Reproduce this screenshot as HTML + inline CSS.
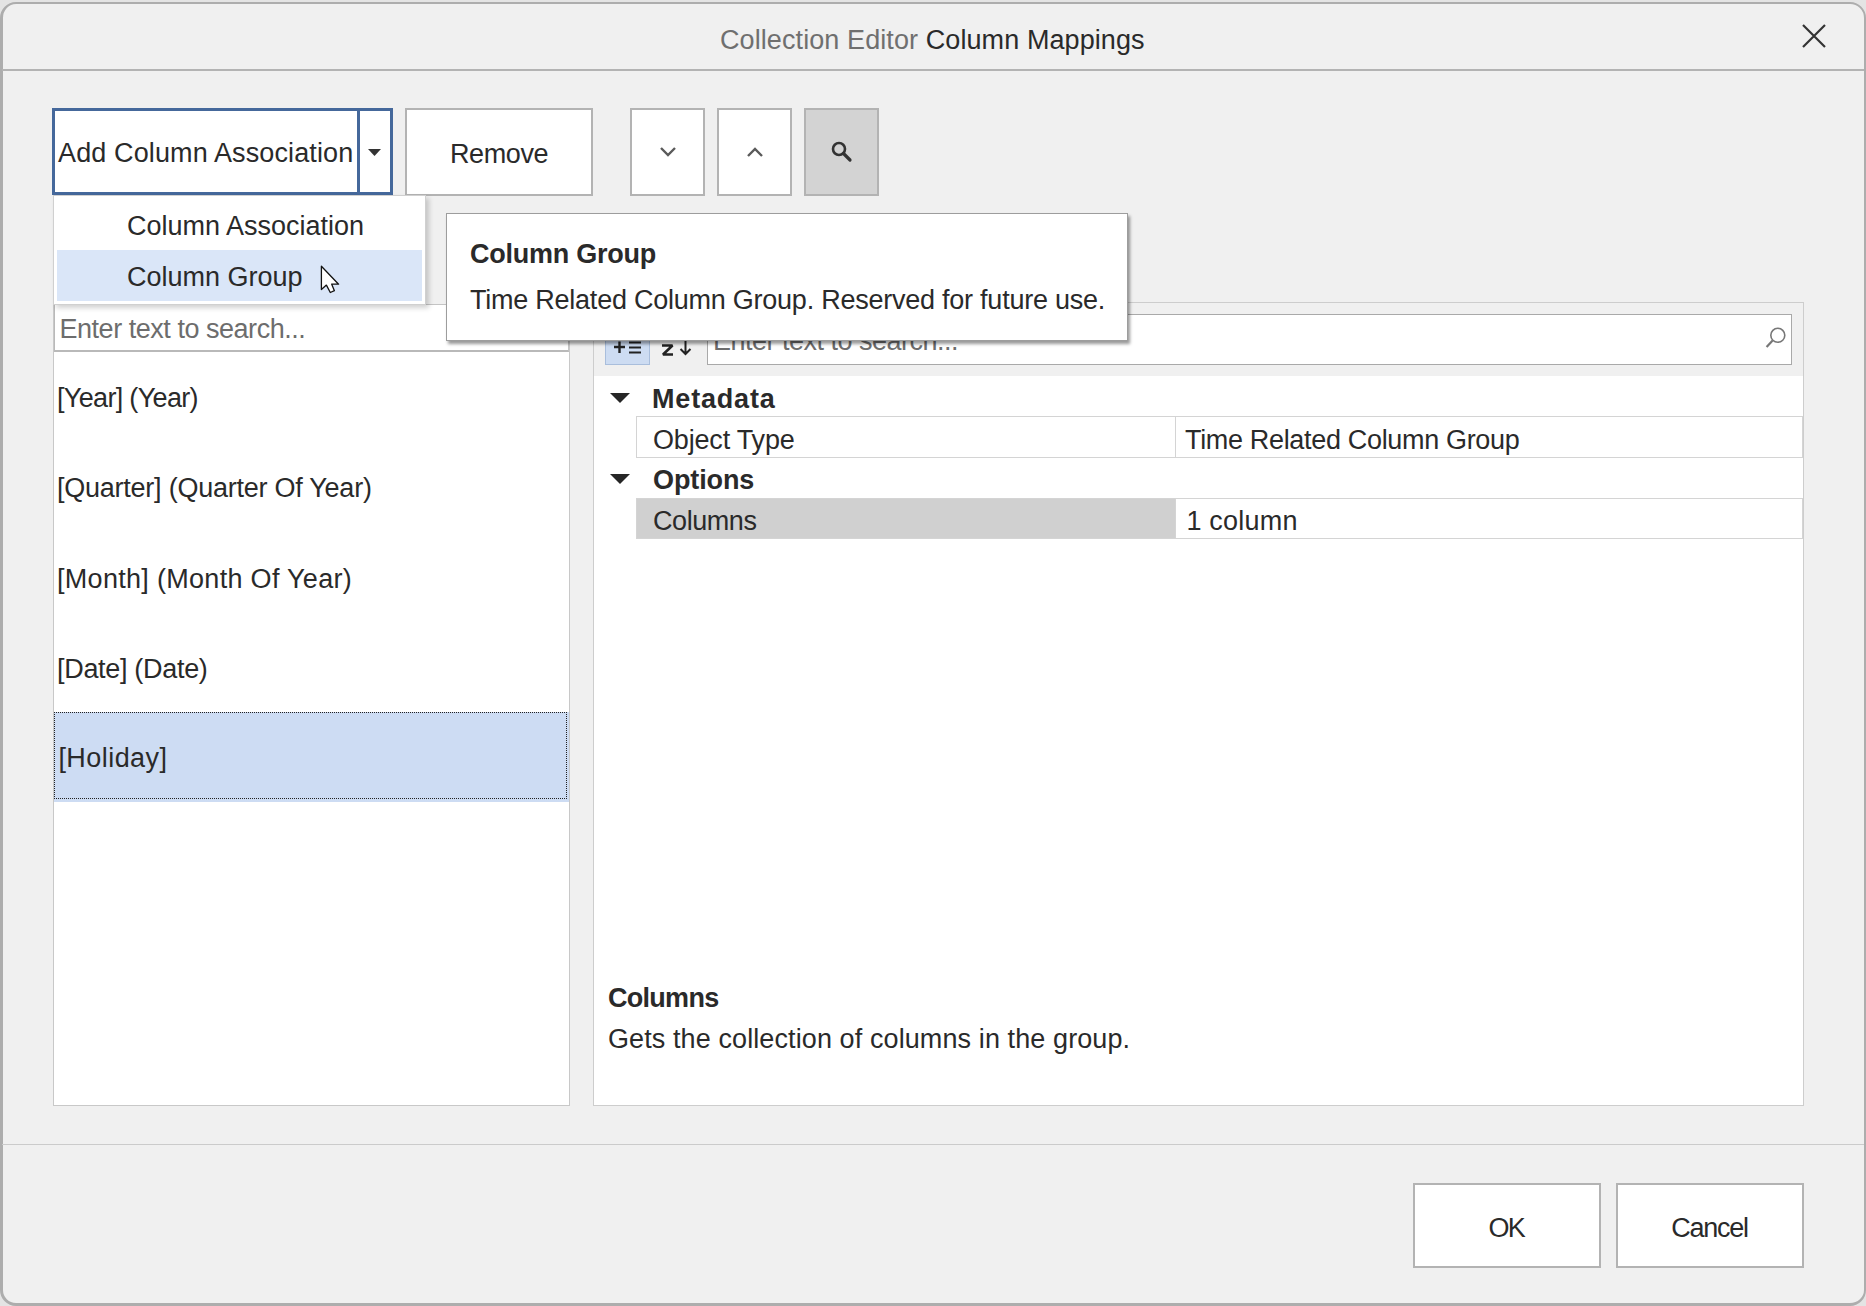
<!DOCTYPE html>
<html><head><meta charset="utf-8">
<style>
html,body{margin:0;padding:0}
body{width:1866px;height:1306px;background:#e4e4e4;position:relative;overflow:hidden;font-family:"Liberation Sans",sans-serif;color:#222}
.abs{position:absolute;box-sizing:border-box}
.t{position:absolute;font-size:27px;line-height:30px;white-space:nowrap;color:#2a2a2a}
.b{font-weight:bold}
#win{left:0;top:2px;width:1866px;height:1304px;border:2px solid #adadad;border-bottom-width:3px;border-left-width:3px;border-radius:16px;background:#f0f0f0;overflow:hidden}
.btn{background:#fff;border:2px solid #b3b3b3}
.hl{background:#fff}
</style></head><body>
<div id="win" class="abs"></div>
<!-- title separator -->
<div class="abs" style="left:2px;top:69px;width:1862px;height:2px;background:#b3b3b3"></div>
<div class="t" style="left:720px;top:25px;letter-spacing:0.09px"><span style="color:#6f6f6f">Collection Editor</span> Column Mappings</div>
<!-- close -->
<svg class="abs" style="left:1796px;top:18px" width="36" height="36" viewBox="0 0 36 36"><path d="M7 7 L29 29 M29 7 L7 29" stroke="#333" stroke-width="2.2" fill="none"/></svg>

<!-- split button -->
<div class="abs" style="left:52px;top:108px;width:341px;height:87px;background:#fff;border:3px solid #45689b"></div>
<div class="abs" style="left:357px;top:108px;width:3px;height:87px;background:#45689b"></div>
<svg class="abs" style="left:367px;top:148px" width="15" height="9"><path d="M1 1 L14 1 L7.5 8 Z" fill="#333"/></svg>
<div class="t" style="left:58px;top:138px;letter-spacing:0.12px">Add Column Association</div>

<div class="abs btn" style="left:405px;top:108px;width:188px;height:88px"></div>
<div class="t" style="left:450px;top:139px;letter-spacing:-0.4px">Remove</div>

<div class="abs btn" style="left:630px;top:108px;width:75px;height:88px"></div>
<svg class="abs" style="left:658px;top:144px" width="20" height="16"><path d="M3 4 L10 11 L17 4" stroke="#5a5a5a" stroke-width="2.4" fill="none"/></svg>
<div class="abs btn" style="left:717px;top:108px;width:75px;height:88px"></div>
<svg class="abs" style="left:745px;top:144px" width="20" height="16"><path d="M3 12 L10 5 L17 12" stroke="#5a5a5a" stroke-width="2.4" fill="none"/></svg>
<div class="abs btn" style="left:804px;top:108px;width:75px;height:88px;background:#d3d3d3"></div>
<svg class="abs" style="left:826px;top:136px" width="30" height="30"><circle cx="13" cy="13" r="6" stroke="#333" stroke-width="2.6" fill="none"/><path d="M17.5 17.5 L24 24" stroke="#333" stroke-width="3.2" stroke-linecap="round"/></svg>

<!-- left panel -->
<div class="abs" style="left:53px;top:304px;width:517px;height:802px;background:#fff;border:1px solid #c8c8c8"></div>
<div class="abs" style="left:54px;top:304px;width:515px;height:48px;background:#fff;border-top:1px solid #c4c4c4;border-bottom:2px solid #b9b9b9;border-left:1px solid #b9b9b9;border-right:1px solid #c4c4c4"></div>
<div class="t" style="left:59.5px;top:314px;color:#6d6d6d;letter-spacing:-0.47px">Enter text to search...</div>
<div class="t" style="left:57px;top:383px;letter-spacing:-0.67px">[Year] (Year)</div>
<div class="t" style="left:57px;top:473px;letter-spacing:-0.24px">[Quarter] (Quarter Of Year)</div>
<div class="t" style="left:57px;top:564px;letter-spacing:0.3px">[Month] (Month Of Year)</div>
<div class="t" style="left:57px;top:654px;letter-spacing:-0.31px">[Date] (Date)</div>
<div class="abs" style="left:54px;top:712px;width:515px;height:90px;background:#cddcf3"></div>
<div class="abs" style="left:54px;top:712px;width:513px;height:87px;border:1px dotted #222"></div>
<div class="t" style="left:58.4px;top:743px;letter-spacing:0.45px">[Holiday]</div>

<!-- right panel -->
<div class="abs" style="left:593px;top:302px;width:1211px;height:804px;background:#fff;border:1px solid #cdcdcd"></div>
<div class="abs" style="left:594px;top:303px;width:1209px;height:73px;background:#f0f0f0"></div>
<div class="abs" style="left:605px;top:316px;width:45px;height:49px;background:#cddcf2;border:1px solid #a9bedc"></div>
<svg class="abs" style="left:605px;top:330px" width="45" height="30"><path d="M9 17 H20 M14.5 11.5 V23" stroke="#222" stroke-width="2.4"/><path d="M24 12.5 H36 M24 17.5 H36 M24 22.5 H36" stroke="#222" stroke-width="2.2"/></svg>
<svg class="abs" style="left:655px;top:330px" width="45" height="30"><path d="M7 15.5 H17.5 L8 24.5 H18" stroke="#222" stroke-width="2.6" fill="none" stroke-linejoin="bevel"/><path d="M30.5 9 V24 M25.5 19 L30.5 24 L35.5 19" stroke="#222" stroke-width="2" fill="none"/></svg>
<div class="abs" style="left:707px;top:314px;width:1085px;height:51px;background:#fff;border:1px solid #a9a9a9"></div>
<div class="t" style="left:713px;top:326px;color:#6d6d6d;letter-spacing:-0.5px">Enter text to search...</div>
<svg class="abs" style="left:1760px;top:322px" width="30" height="30"><circle cx="17.8" cy="13.3" r="7" stroke="#777" stroke-width="1.6" fill="none"/><path d="M12.6 18.5 L6.6 24.9" stroke="#777" stroke-width="2.2"/></svg>

<!-- grid -->
<svg class="abs" style="left:606px;top:390px" width="28" height="16"><path d="M4 3 H24 L14 13 Z" fill="#262626"/></svg>
<div class="t b" style="left:652px;top:384px;letter-spacing:0.81px">Metadata</div>
<div class="abs" style="left:636px;top:416px;width:1167px;height:42px;border:1px solid #d4d4d4"></div>
<div class="abs" style="left:1175px;top:416px;width:1px;height:42px;background:#d4d4d4"></div>
<div class="t" style="left:653px;top:425px;letter-spacing:-0.18px">Object Type</div>
<div class="t" style="left:1185px;top:425px;letter-spacing:-0.33px">Time Related Column Group</div>
<svg class="abs" style="left:606px;top:471px" width="28" height="16"><path d="M4 3 H24 L14 13 Z" fill="#262626"/></svg>
<div class="t b" style="left:653px;top:465px;letter-spacing:-0.1px">Options</div>
<div class="abs" style="left:636px;top:498px;width:1167px;height:41px;border:1px solid #d4d4d4"></div>
<div class="abs" style="left:637px;top:499px;width:538px;height:39px;background:#d0d0d0"></div>
<div class="abs" style="left:1175px;top:498px;width:1px;height:41px;background:#d4d4d4"></div>
<div class="t" style="left:653px;top:506px;letter-spacing:-0.43px">Columns</div>
<div class="t" style="left:1186.4px;top:506px;letter-spacing:0.23px">1 column</div>

<div class="t b" style="left:608px;top:983px;letter-spacing:-0.72px">Columns</div>
<div class="t" style="left:608px;top:1024px;letter-spacing:0.1px">Gets the collection of columns in the group.</div>

<!-- bottom -->
<div class="abs" style="left:2px;top:1144px;width:1862px;height:1px;background:#cbcbcb"></div>
<div class="abs btn" style="left:1413px;top:1183px;width:188px;height:85px"></div>
<div class="t" style="left:1488.4px;top:1213px;letter-spacing:-1.6px">OK</div>
<div class="abs btn" style="left:1616px;top:1183px;width:188px;height:85px"></div>
<div class="t" style="left:1671.3px;top:1213px;letter-spacing:-1.28px">Cancel</div>

<!-- dropdown menu -->
<div class="abs" style="left:53px;top:195px;width:373px;height:110px;background:#fff;border:1px solid #d0d0d0;box-shadow:3px 3px 5px rgba(0,0,0,0.18)"></div>
<div class="abs" style="left:57px;top:250px;width:365px;height:51px;background:#dae6f8"></div>
<div class="t" style="left:127px;top:211px">Column Association</div>
<div class="t" style="left:127px;top:262px">Column Group</div>
<svg class="abs" style="left:319px;top:263px" width="24" height="34"><path d="M2.4 3.3 V26.5 L7.4 22.1 L11.3 29.5 L15.4 27.7 L12.7 21.2 H19.6 Z" fill="#fff" stroke="#111" stroke-width="1.3" stroke-linejoin="round"/></svg>

<!-- tooltip -->
<div class="abs" style="left:446px;top:213px;width:682px;height:128px;background:#fff;border:1px solid #9d9d9d;box-shadow:2px 3px 3px rgba(0,0,0,0.4)"></div>
<div class="t b" style="left:470px;top:239px;letter-spacing:-0.25px">Column Group</div>
<div class="t" style="left:470px;top:285px;letter-spacing:-0.24px">Time Related Column Group. Reserved for future use.</div>
</body></html>
